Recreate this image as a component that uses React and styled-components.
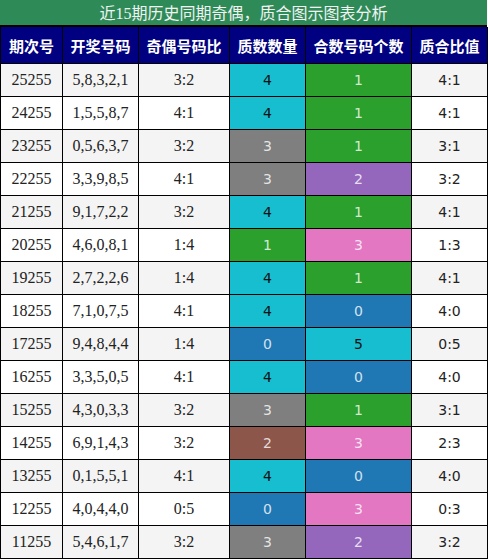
import React from "react";
import styled, { createGlobalStyle } from "styled-components";

const Global = createGlobalStyle`
  html, body { margin: 0; padding: 0; background: #ffffff; }
`;

const Wrap = styled.div`
  width: 488px;
  font-family: "Noto Sans CJK SC", "Noto Sans", sans-serif;
`;

const Title = styled.div`
  width: 487px;
  height: 25px;
  line-height: 25px;
  background: #2e8b57;
  border-bottom: 2px solid #000;
  color: #f2f2f2;
  font-size: 16px;
  text-align: center;
  white-space: nowrap;
`;

const Num = styled.span`
  font-family: "Liberation Serif", serif;
`;

const Grid = styled.div`
  display: grid;
  grid-template-columns: 62px 76px 91px 76px 106px 76px;
  border-left: 1px solid #000;
  width: 487px;
`;

const Head = styled.div`
  height: 36px;
  background: #000080;
  color: #ffffff;
  font-weight: 700;
  font-size: 15px;
  display: flex;
  align-items: center;
  justify-content: center;
  border-right: 1px solid #000;
  border-bottom: 1px solid #000;
  white-space: nowrap;
`;

const Cell = styled.div`
  height: 32px;
  display: flex;
  align-items: center;
  justify-content: center;
  border-right: 1px solid #000;
  border-bottom: 1px solid #000;
  background: ${(p) => p.$bg};
  color: ${(p) => p.$fg || "#222"};
  font-family: ${(p) =>
    p.$sans ? '"DejaVu Sans", sans-serif' : '"Liberation Serif", serif'};
  font-size: ${(p) => (p.$sans ? "14px" : "16px")};
`;

const C = {
  cyan: "#17becf",
  green: "#2ca02c",
  gray: "#7f7f7f",
  purple: "#9467bd",
  pink: "#e377c2",
  blue: "#1f77b4",
  brown: "#8c564b",
};

const rows = [
  ["25255", "5,8,3,2,1", "3:2", "4", "cyan", "1", "green", "4:1"],
  ["24255", "1,5,5,8,7", "4:1", "4", "cyan", "1", "green", "4:1"],
  ["23255", "0,5,6,3,7", "3:2", "3", "gray", "1", "green", "3:1"],
  ["22255", "3,3,9,8,5", "4:1", "3", "gray", "2", "purple", "3:2"],
  ["21255", "9,1,7,2,2", "3:2", "4", "cyan", "1", "green", "4:1"],
  ["20255", "4,6,0,8,1", "1:4", "1", "green", "3", "pink", "1:3"],
  ["19255", "2,7,2,2,6", "1:4", "4", "cyan", "1", "green", "4:1"],
  ["18255", "7,1,0,7,5", "4:1", "4", "cyan", "0", "blue", "4:0"],
  ["17255", "9,4,8,4,4", "1:4", "0", "blue", "5", "cyan", "0:5"],
  ["16255", "3,3,5,0,5", "4:1", "4", "cyan", "0", "blue", "4:0"],
  ["15255", "4,3,0,3,3", "3:2", "3", "gray", "1", "green", "3:1"],
  ["14255", "6,9,1,4,3", "3:2", "2", "brown", "3", "pink", "2:3"],
  ["13255", "0,1,5,5,1", "4:1", "4", "cyan", "0", "blue", "4:0"],
  ["12255", "4,0,4,4,0", "0:5", "0", "blue", "3", "pink", "0:3"],
  ["11255", "5,4,6,1,7", "3:2", "3", "gray", "2", "purple", "3:2"],
];

const heads = ["期次号", "开奖号码", "奇偶号码比", "质数数量", "合数号码个数", "质合比值"];

const fgFor = (c) => (c === "cyan" ? "#111" : "rgba(255,255,255,0.8)");

export default function App() {
  return (
    <Wrap>
      <Global />
      <Title>
        近<Num>15</Num>期历史同期奇偶，质合图示图表分析
      </Title>
      <Grid>
        {heads.map((h) => (
          <Head key={h}>{h}</Head>
        ))}
        {rows.map((r, i) => {
          const bg = i % 2 === 0 ? "#f4f4f4" : "#ffffff";
          return (
            <React.Fragment key={r[0]}>
              <Cell $bg={bg}>{r[0]}</Cell>
              <Cell $bg={bg}>{r[1]}</Cell>
              <Cell $bg={bg}>{r[2]}</Cell>
              <Cell $sans $bg={C[r[4]]} $fg={fgFor(r[4])}>{r[3]}</Cell>
              <Cell $sans $bg={C[r[6]]} $fg={fgFor(r[6])}>{r[5]}</Cell>
              <Cell $sans $bg={bg}>{r[7]}</Cell>
            </React.Fragment>
          );
        })}
      </Grid>
    </Wrap>
  );
}
